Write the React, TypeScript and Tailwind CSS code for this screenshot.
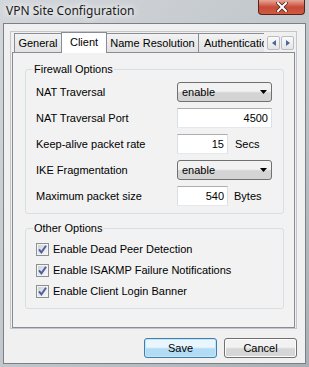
import React from 'react';

const tabs = [
  { label: 'General', width: 'w-[48px]' },
  { label: 'Client', width: 'w-[46px]', active: true },
  { label: 'Name Resolution', width: 'w-[93px]' },
  { label: 'Authentication', width: 'w-[80px]' },
];

const Dropdown: React.FC<{ value: string }> = ({ value }) => (
  <div className="flex h-[20px] w-[95px] items-center justify-between rounded-[3px] border border-[#707070] bg-linear-to-b from-[#f2f2f2] from-45% to-[#d4d4d4] to-55% pl-[4px] pr-[4px]">
    <span>{value}</span>
    <svg width="7" height="4" viewBox="0 0 7 4">
      <path d="M0 0H7L3.5 4Z" fill="#000" />
    </svg>
  </div>
);

const NumberBox: React.FC<{ value: string; wide?: boolean }> = ({ value, wide }) => (
  <div
    className={`flex h-[20px] items-center justify-end border border-t-[#abadb3] border-x-[#dbdfe6] border-b-[#e3e9ef] bg-white pr-[3px] ${
      wide ? 'w-[95px]' : 'w-[51px]'
    }`}
  >
    {value}
  </div>
);

const Checkbox: React.FC<{ label: string }> = ({ label }) => (
  <div className="flex h-[17px] items-center gap-[4px]">
    <svg width="13" height="13" viewBox="0 0 13 13">
      <defs>
        <linearGradient id="cbfill" x1="0" y1="0" x2="1" y2="1">
          <stop offset="0" stopColor="#cdd1d7" />
          <stop offset="1" stopColor="#f7f7f7" />
        </linearGradient>
      </defs>
      <rect x="0.5" y="0.5" width="12" height="12" fill="#f4f4f4" stroke="#8e8f8f" />
      <rect x="2" y="2" width="9" height="9" fill="url(#cbfill)" />
      <path d="M3 6.3L5.4 9.3L10 2.8" fill="none" stroke="#4b5f9c" strokeWidth="1.9" />
    </svg>
    <span>{label}</span>
  </div>
);

const ScrollArrow: React.FC<{ dir: 'left' | 'right' }> = ({ dir }) => (
  <div className="flex h-[14px] w-[13px] items-center justify-center rounded-[2px] border border-[#b9bcc2] bg-linear-to-b from-[#fbfbfb] to-[#e4e4e4]">
    <svg width="4" height="6" viewBox="0 0 4 6">
      <path d={dir === 'left' ? 'M4 0V6L0 3Z' : 'M0 0V6L4 3Z'} fill="#4a6799" />
    </svg>
  </div>
);

const Row: React.FC<{ label: string; children: React.ReactNode }> = ({ label, children }) => (
  <div className="flex h-[20px] items-center">
    <span className="w-[141px] shrink-0">{label}</span>
    {children}
  </div>
);

export default function App() {
  return (
    <div className="h-[367px] w-[309px] overflow-hidden bg-linear-to-br from-[#d3d7db] via-[#c2c7cc] to-[#a9afb5] font-['Liberation_Sans',Arial,sans-serif] text-[11px] leading-[13px] text-black">
      <div className="flex h-[23px] items-start justify-between pl-[6px] pr-[4px]">
        <span className="pt-[3px] font-['Noto_Sans',sans-serif] text-[12px] leading-[16px] text-[#1b1b1b] [text-shadow:0_0_6px_#fff,0_0_10px_#fff]">
          VPN Site Configuration
        </span>
        <div className="flex h-[15px] w-[47px] items-center justify-center rounded-b-[4px] border border-t-0 border-[#5a2219] bg-linear-to-b from-[#e7a699] via-[#c74a38] to-[#cf5a40]">
          <svg width="12" height="10" viewBox="0 0 12 10">
            <path d="M2 1L10 9M10 1L2 9" stroke="#4a2a24" strokeWidth="3.6" strokeLinecap="square" />
            <path d="M2 1L10 9M10 1L2 9" stroke="#fff" strokeWidth="2" strokeLinecap="square" />
          </svg>
        </div>
      </div>

      <div className="ml-[3px] h-[341px] w-[303px] border border-[#7b8087] bg-[#f0f0f0] pl-[6px] pt-[7px]">
        <div className="flex h-[298px] w-[287px] flex-col border border-[#c3c6cb]">
          <div className="relative z-10 -mb-[1px] flex h-[21px] items-end pl-[3px]">
            <div className="flex h-[21px] w-[250px] items-end overflow-hidden">
              {tabs.map((t, i) =>
                t.active ? (
                  <div
                    key={t.label}
                    className={`relative z-10 -ml-[1px] flex h-[21px] shrink-0 items-center justify-center border border-b-0 border-[#898c95] bg-white pb-[2px] ${t.width}`}
                  >
                    {t.label}
                  </div>
                ) : (
                  <div
                    key={t.label}
                    className={`mb-[1px] flex h-[19px] shrink-0 items-center border border-b-0 border-[#898c95] bg-linear-to-b from-[#f3f3f3] to-[#e2e2e2] ${
                      i === 0 ? '' : '-ml-[1px]'
                    } ${i === 3 ? 'justify-start pl-[5px]' : 'justify-center'} ${t.width}`}
                  >
                    {t.label}
                  </div>
                )
              )}
            </div>
            <div className="mb-[3px] ml-[3px] flex gap-[1px]">
              <ScrollArrow dir="left" />
              <ScrollArrow dir="right" />
            </div>
          </div>

          <div className="ml-[1px] h-[276px] w-[283px] border border-[#898c95] bg-[#f2f2f2] pl-[12px]">
            <fieldset className="mt-[10px] w-[259px] rounded-[3px] border border-[#d5dfe5] px-[10px] pb-[7px] pt-[6px]">
              <legend className="-ml-[3px] px-[1px] leading-[13px]">Firewall Options</legend>
              <div className="flex flex-col gap-[6px]">
                <Row label="NAT Traversal">
                  <Dropdown value="enable" />
                </Row>
                <Row label="NAT Traversal Port">
                  <NumberBox value="4500" wide />
                </Row>
                <Row label="Keep-alive packet rate">
                  <NumberBox value="15" />
                  <span className="ml-[7px]">Secs</span>
                </Row>
                <Row label="IKE Fragmentation">
                  <Dropdown value="enable" />
                </Row>
                <Row label="Maximum packet size">
                  <NumberBox value="540" />
                  <span className="ml-[6px]">Bytes</span>
                </Row>
              </div>
            </fieldset>

            <fieldset className="mt-[8px] w-[259px] rounded-[3px] border border-[#d5dfe5] px-[10px] pb-[8px] pt-[6px]">
              <legend className="-ml-[3px] px-[1px] leading-[13px]">Other Options</legend>
              <div className="flex flex-col gap-[4px]">
                <Checkbox label="Enable Dead Peer Detection" />
                <Checkbox label="Enable ISAKMP Failure Notifications" />
                <Checkbox label="Enable Client Login Banner" />
              </div>
            </fieldset>
          </div>
        </div>

        <div className="mt-[9px] flex w-[287px] justify-end gap-[7px]">
          <button className="h-[20px] w-[73px] rounded-[3px] border border-[#3c7fb1] bg-linear-to-b from-[#eaf6fd] from-45% to-[#b2dcf4] to-55% shadow-[inset_0_0_0_1px_#c4e5f6]">
            Save
          </button>
          <button className="h-[20px] w-[73px] rounded-[3px] border border-[#707070] bg-linear-to-b from-[#f2f2f2] from-45% to-[#d6d6d6] to-55% shadow-[inset_0_0_0_1px_#fcfcfc]">
            Cancel
          </button>
        </div>
      </div>
    </div>
  );
}
